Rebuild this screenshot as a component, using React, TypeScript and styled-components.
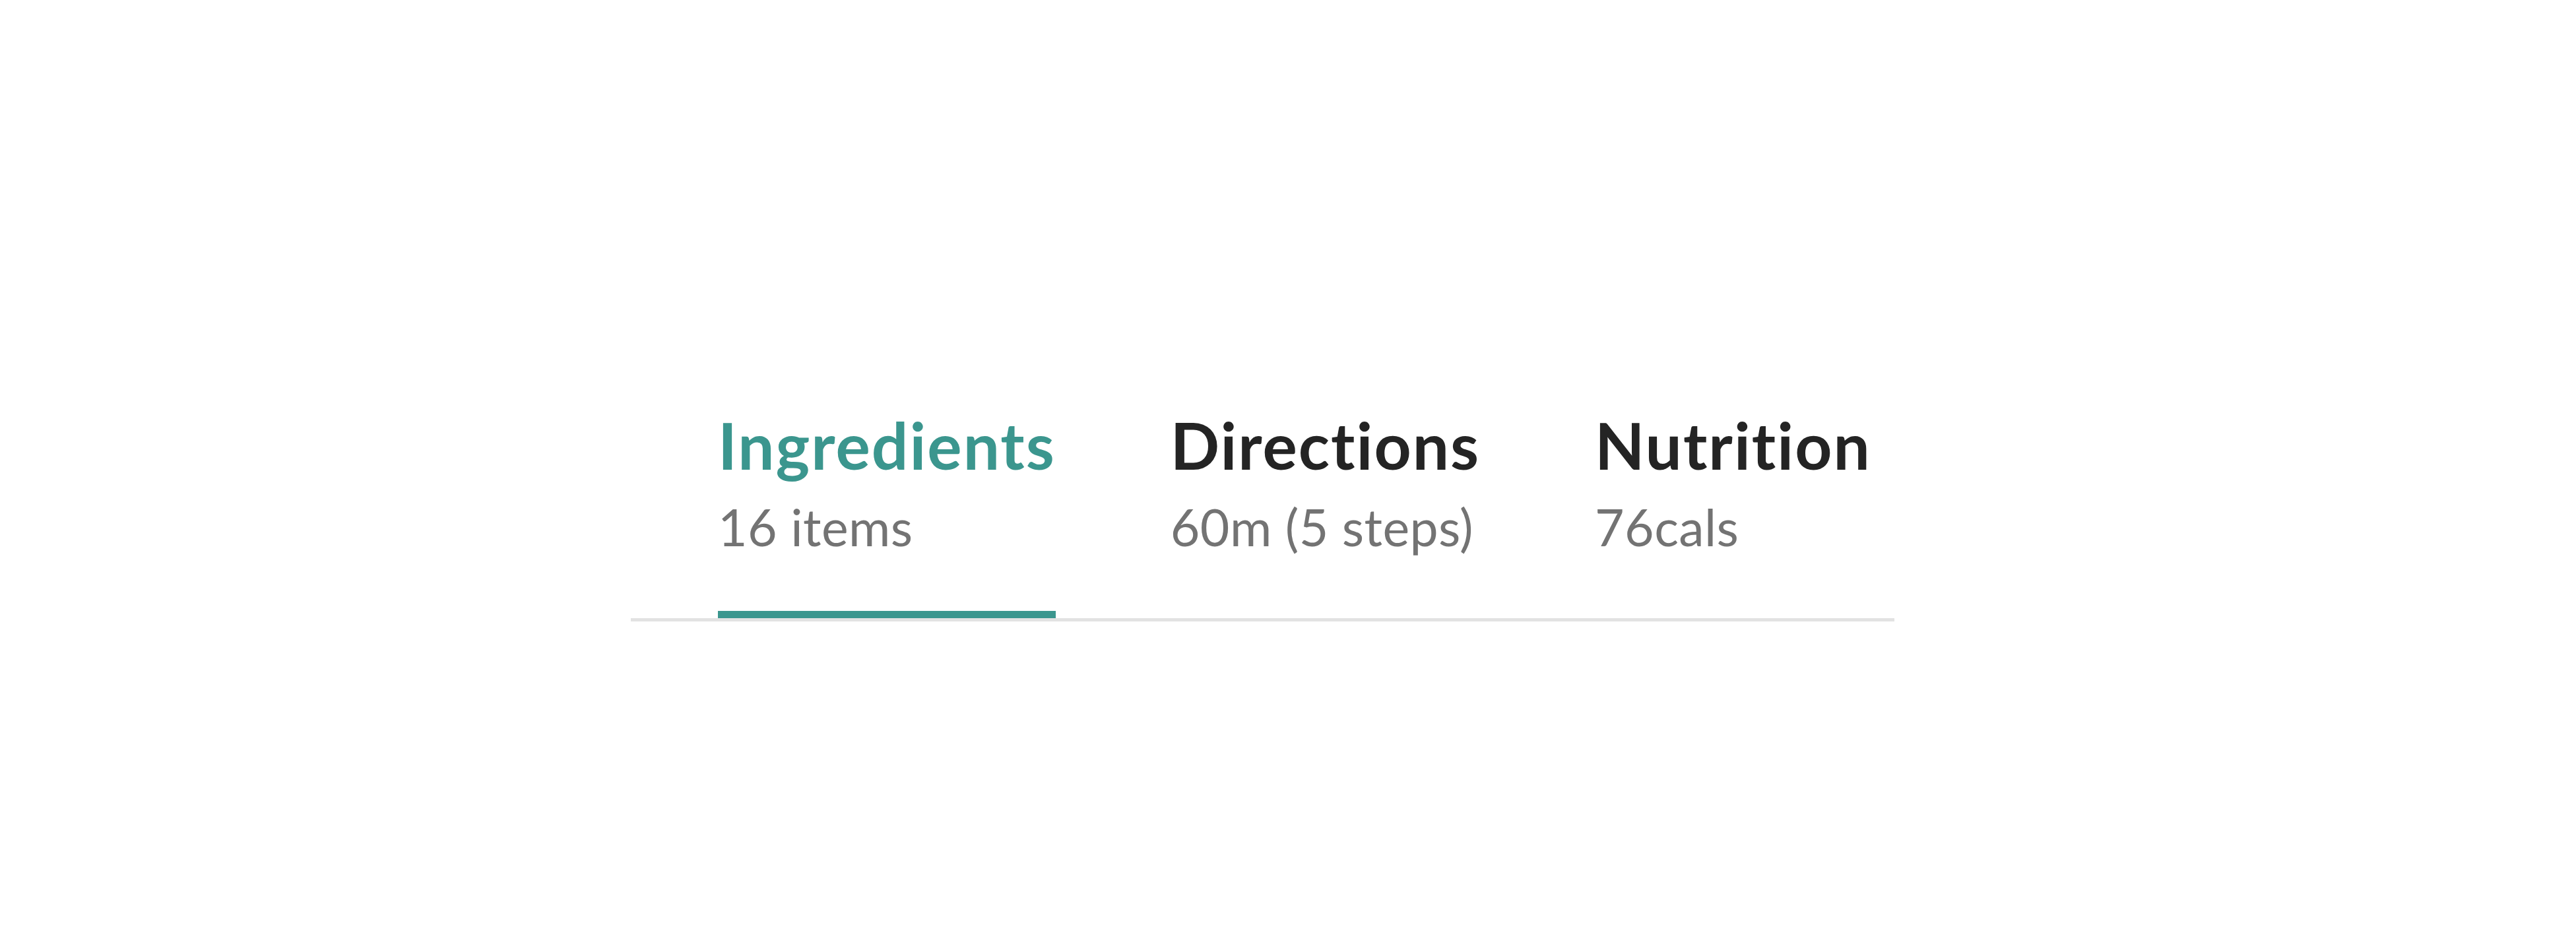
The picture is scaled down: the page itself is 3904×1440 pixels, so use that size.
import React from 'react';
import styled, { createGlobalStyle } from 'styled-components';

interface TabData {
  title: string,
  detail: string
}

const tabs: TabData[] = [
  { title: 'Ingredients', detail: '16 items' },
  { title: 'Directions', detail: '60m (5 steps)' },
  { title: 'Nutrition', detail: '76cals' },
];

const App: React.FC = () => {
  const active = 0;

  return (
    <>
      <GlobalStyle />
      <Page>
        <TabBar>
          {tabs.map((tab, i) => (
            <Tab key={tab.title} active={i === active}>
              <TabTitle active={i === active}>{tab.title}</TabTitle>
              <TabDetail>{tab.detail}</TabDetail>
            </Tab>
          ))}
        </TabBar>
      </Page>
    </>
  );
}

export default App;


const GlobalStyle = createGlobalStyle`
  html, body {
    margin: 0;
    padding: 0;
    background: #fff;
  }
  body {
    font-family: Lato, "Noto Sans", sans-serif;
    font-variant-ligatures: none;
    -webkit-font-smoothing: antialiased;
  }
`;

const Page = styled.div`
  width: 3904px;
  height: 1440px;
  box-sizing: border-box;
  padding: 625px 0 0 956px;
`;

const TabBar = styled.div`
  display: flex;
  align-items: flex-start;
  gap: 174px;
  width: 1915px;
  box-sizing: border-box;
  padding-left: 132px;
  border-bottom: 5px solid #e2e2e2;
`;

const Tab = styled.div<{active: boolean}>`
  display: flex;
  flex-direction: column;
  gap: 37px;
  padding-bottom: 89px;
  border-bottom: 11px solid ${props => props.active ? '#3b968e' : 'transparent'};
  cursor: pointer;
`;

const TabTitle = styled.span<{active: boolean}>`
  font-size: 98px;
  line-height: 1;
  font-weight: 700;
  letter-spacing: 2px;
  white-space: nowrap;
  color: ${props => props.active ? '#3b968e' : '#242424'};
`;

const TabDetail = styled.span`
  font-size: 77px;
  line-height: 1;
  font-weight: 400;
  letter-spacing: 0.4px;
  white-space: nowrap;
  color: #737373;
`;
